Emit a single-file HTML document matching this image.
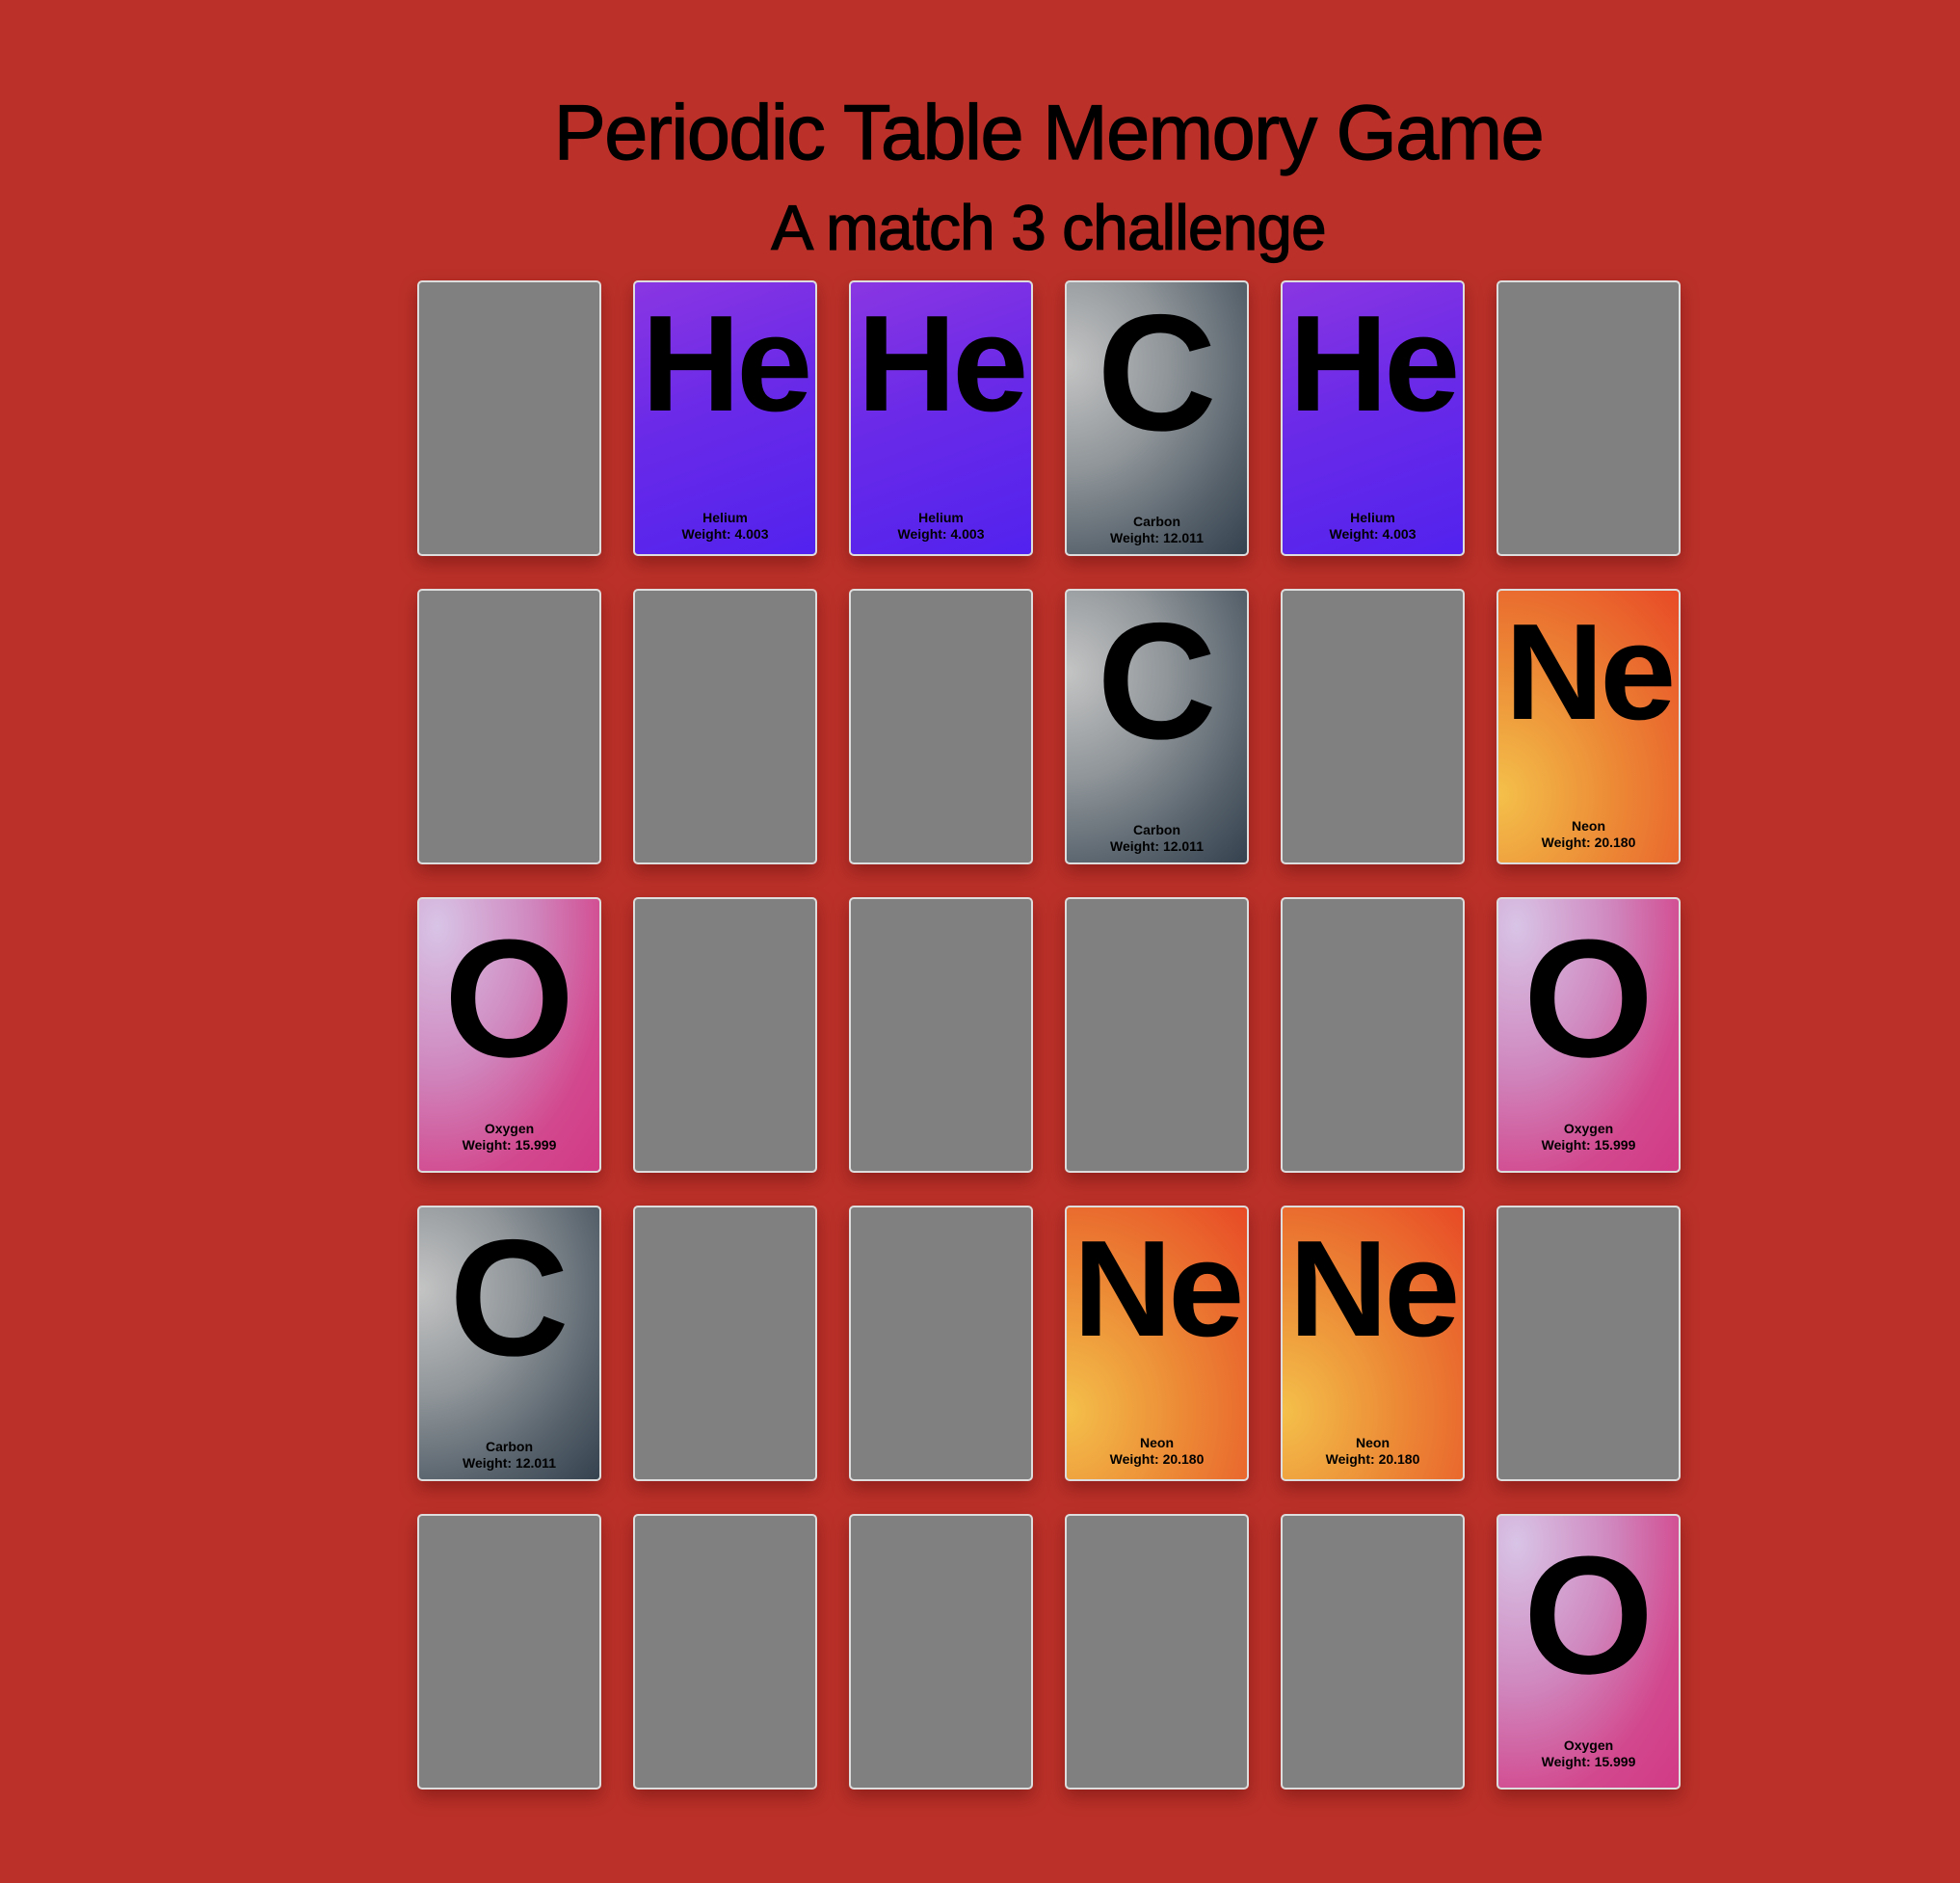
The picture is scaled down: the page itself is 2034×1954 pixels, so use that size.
<!DOCTYPE html>
<html><head><meta charset="utf-8"><style>
html,body{margin:0;padding:0}
body{width:2034px;height:1954px;background:#bb3129;position:relative;overflow:hidden;font-family:"Liberation Sans",sans-serif;color:#000}
h1,h2{position:absolute;left:0;width:2176px;text-align:center;margin:0;font-weight:normal;white-space:nowrap;-webkit-text-stroke:1.2px #000}
h1{top:90px;font-size:81px;line-height:96px;letter-spacing:-1.5px}
h2{top:198px;font-size:66px;line-height:76px;letter-spacing:-1px}
.c{position:absolute;width:187px;height:282px;border:2px solid #ddd;border-radius:5px;background:#808080;box-shadow:0 8px 18px rgba(90,10,10,.45);overflow:hidden}
.s{position:absolute;top:-15px;left:0;width:100%;text-align:center;font-weight:bold;font-size:142px;line-height:200px;letter-spacing:-4px}
.n{position:absolute;left:0;width:100%;bottom:12px;text-align:center;font-weight:bold;font-size:14px;line-height:17px}
.he{background:linear-gradient(160deg,#8a36e2 0%,#6a2ae8 45%,#5222ee 100%)}
.cb{background:radial-gradient(ellipse at 0% 30%,#c4c4c4 0%,#8f9599 40%,#55606a 75%,#35424f 100%)}
.ne{background:radial-gradient(ellipse at 0% 75%,#f4c04a 0%,#ec8a36 45%,#e84a26 100%)}
.o{background:radial-gradient(ellipse at 10% 10%,#d8c4e6 0%,#d08ac0 40%,#d2488e 75%,#d23a86 100%)}
.cb .s{top:-6px;font-size:172px;letter-spacing:0}
.o .s{top:3px;font-size:174px;letter-spacing:0}
.o .n{bottom:18px}
.cb .n{bottom:8px}
</style></head><body>
<h1>Periodic Table Memory Game</h1>
<h2>A match 3 challenge</h2>

<div class="c" style="left:433px;top:291px"></div>
<div class="c he" style="left:657px;top:291px"><div class="s">He</div><div class="n">Helium<br>Weight: 4.003</div></div>
<div class="c he" style="left:881px;top:291px"><div class="s">He</div><div class="n">Helium<br>Weight: 4.003</div></div>
<div class="c cb" style="left:1105px;top:291px"><div class="s">C</div><div class="n">Carbon<br>Weight: 12.011</div></div>
<div class="c he" style="left:1329px;top:291px"><div class="s">He</div><div class="n">Helium<br>Weight: 4.003</div></div>
<div class="c" style="left:1553px;top:291px"></div>

<div class="c" style="left:433px;top:611px"></div>
<div class="c" style="left:657px;top:611px"></div>
<div class="c" style="left:881px;top:611px"></div>
<div class="c cb" style="left:1105px;top:611px"><div class="s">C</div><div class="n">Carbon<br>Weight: 12.011</div></div>
<div class="c" style="left:1329px;top:611px"></div>
<div class="c ne" style="left:1553px;top:611px"><div class="s">Ne</div><div class="n">Neon<br>Weight: 20.180</div></div>

<div class="c o" style="left:433px;top:931px"><div class="s">O</div><div class="n">Oxygen<br>Weight: 15.999</div></div>
<div class="c" style="left:657px;top:931px"></div>
<div class="c" style="left:881px;top:931px"></div>
<div class="c" style="left:1105px;top:931px"></div>
<div class="c" style="left:1329px;top:931px"></div>
<div class="c o" style="left:1553px;top:931px"><div class="s">O</div><div class="n">Oxygen<br>Weight: 15.999</div></div>

<div class="c cb" style="left:433px;top:1251px"><div class="s">C</div><div class="n">Carbon<br>Weight: 12.011</div></div>
<div class="c" style="left:657px;top:1251px"></div>
<div class="c" style="left:881px;top:1251px"></div>
<div class="c ne" style="left:1105px;top:1251px"><div class="s">Ne</div><div class="n">Neon<br>Weight: 20.180</div></div>
<div class="c ne" style="left:1329px;top:1251px"><div class="s">Ne</div><div class="n">Neon<br>Weight: 20.180</div></div>
<div class="c" style="left:1553px;top:1251px"></div>

<div class="c" style="left:433px;top:1571px"></div>
<div class="c" style="left:657px;top:1571px"></div>
<div class="c" style="left:881px;top:1571px"></div>
<div class="c" style="left:1105px;top:1571px"></div>
<div class="c" style="left:1329px;top:1571px"></div>
<div class="c o" style="left:1553px;top:1571px"><div class="s">O</div><div class="n">Oxygen<br>Weight: 15.999</div></div>
</body></html>
